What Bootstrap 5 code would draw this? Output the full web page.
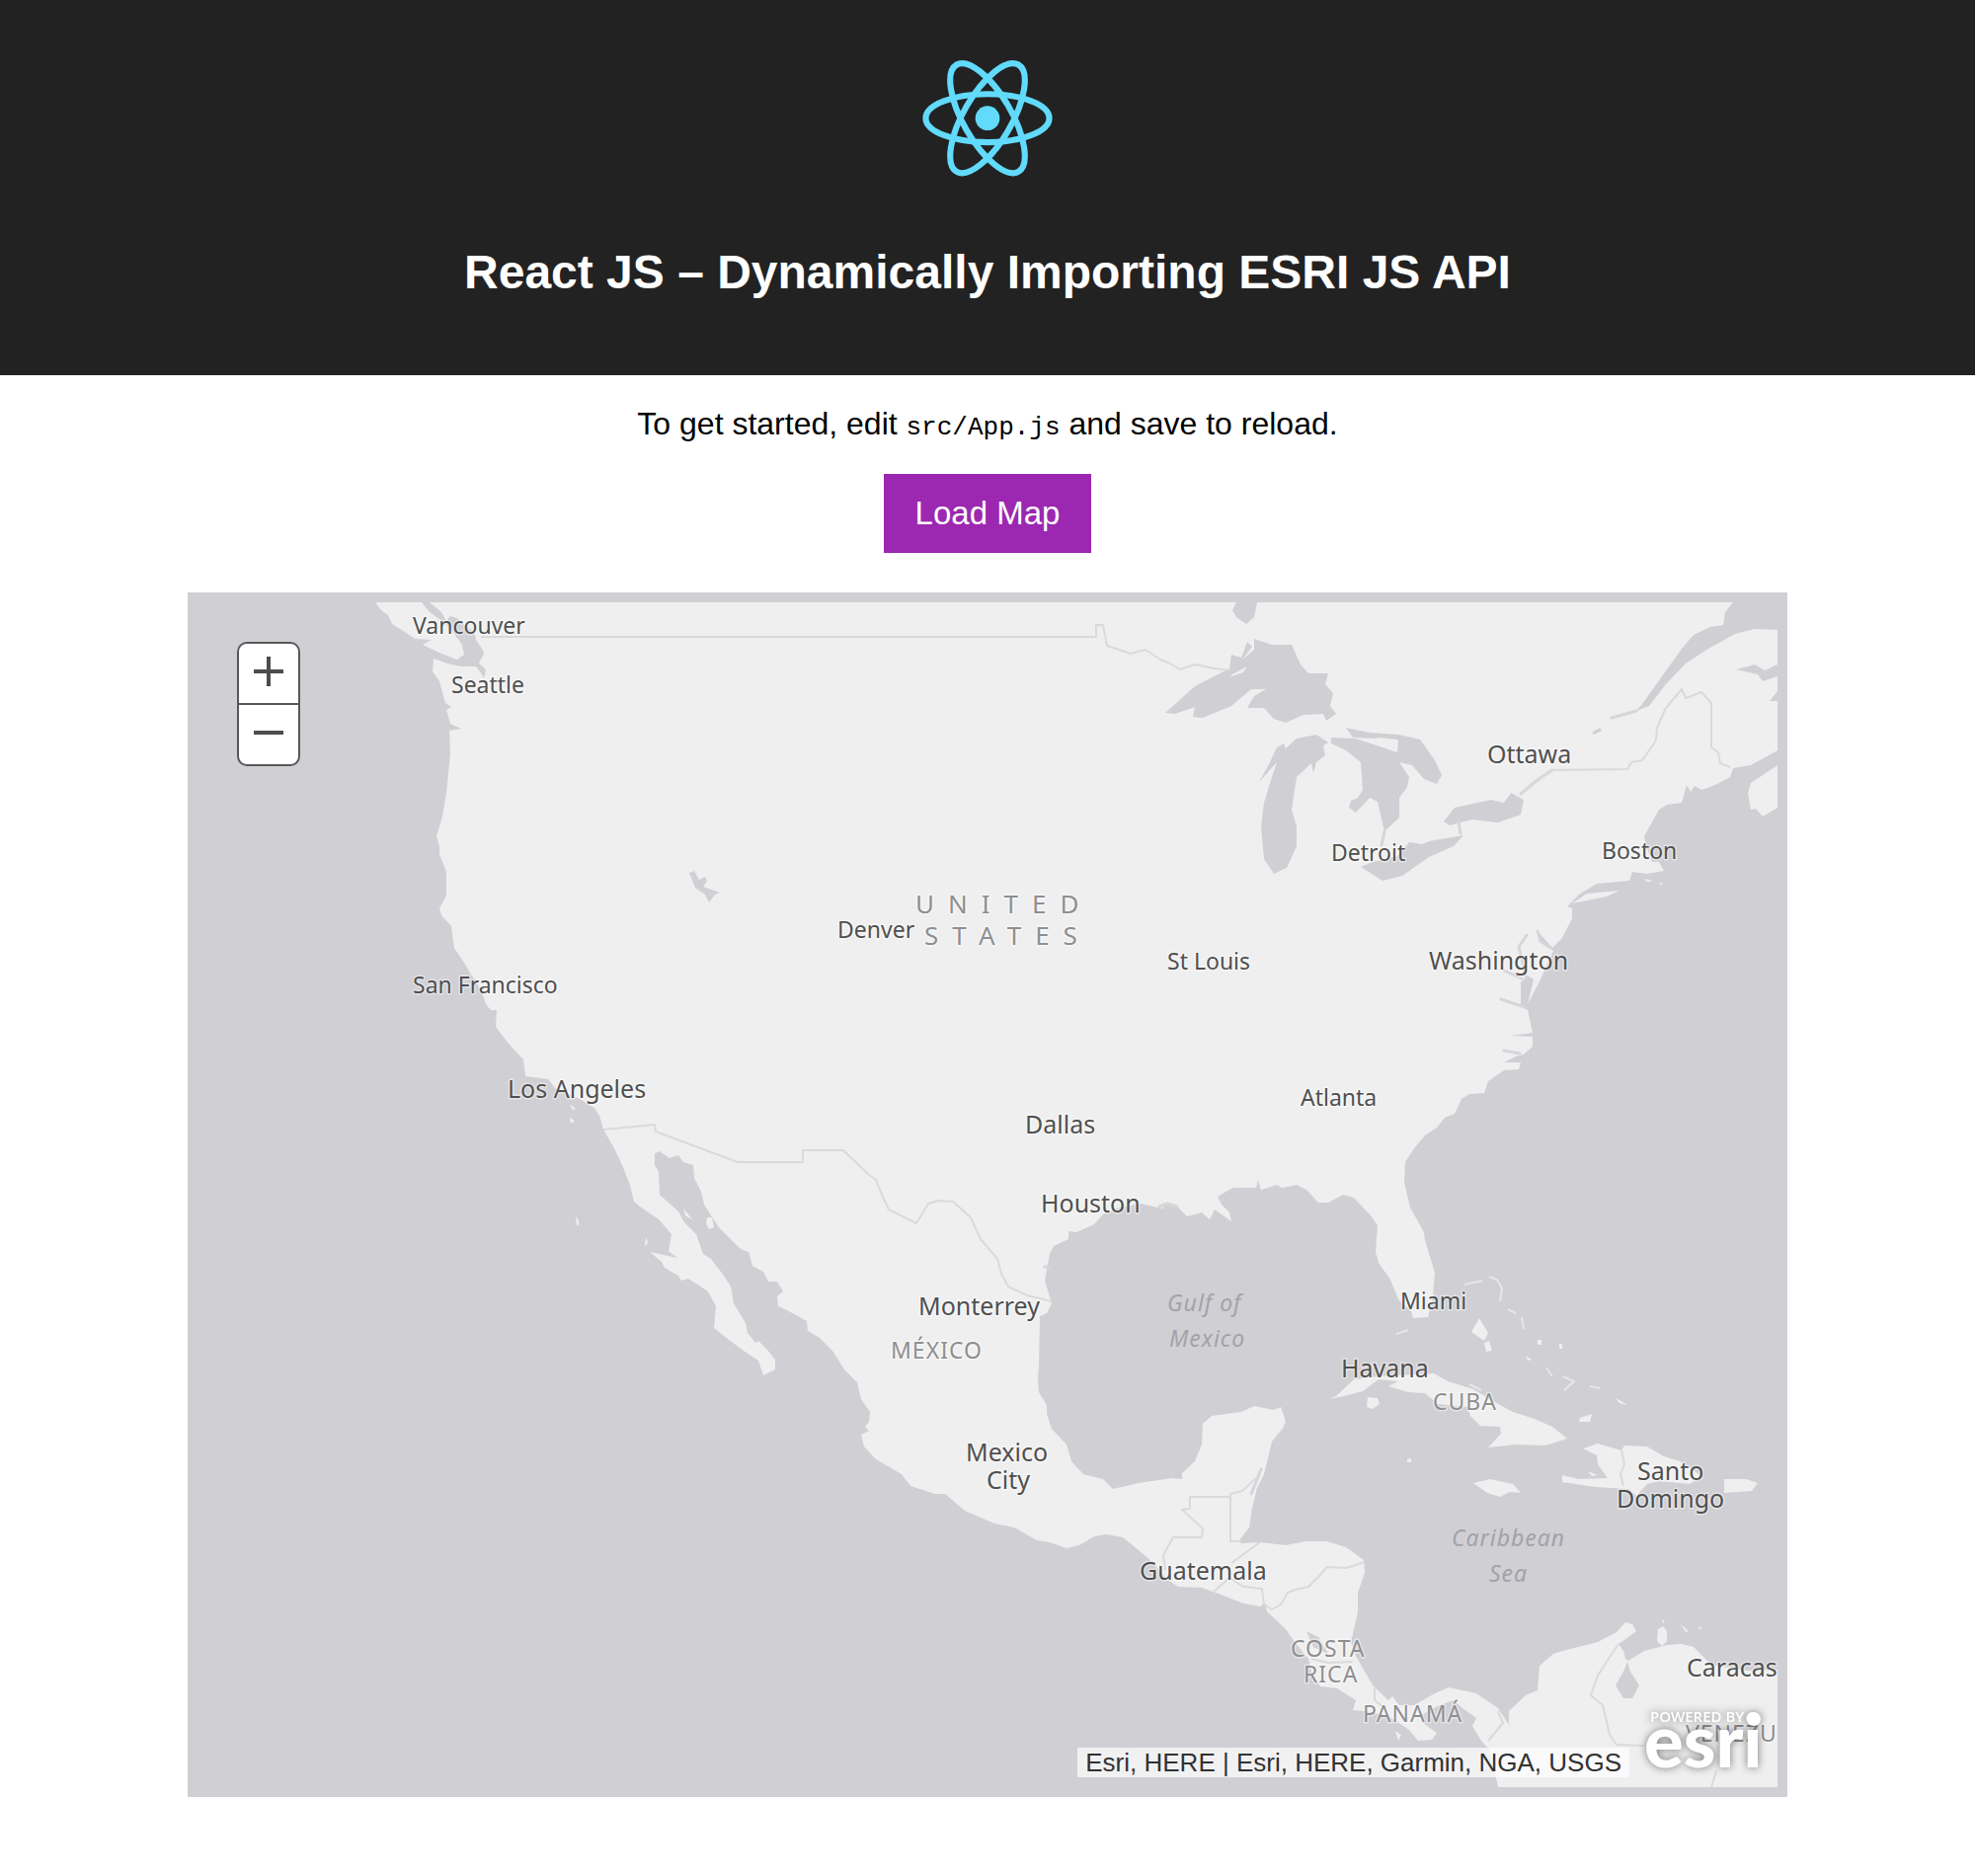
<!DOCTYPE html>
<html lang="en">
<head>
<meta charset="utf-8">
<meta name="viewport" content="width=device-width, initial-scale=1">
<title>React JS – Dynamically Importing ESRI JS API</title>
<link href="https://cdn.jsdelivr.net/npm/bootstrap@5.3.0/dist/css/bootstrap.min.css" rel="stylesheet">
<style>
  body { font-family: "Liberation Sans", Arial, sans-serif; color: #000; }
  .app-header { background: #222; padding: 40px; min-height: 380px; }
  .app-logo { width: 226px; height: 160px; }
  .app-title { font-size: 48px; line-height: 56px; margin: 48px 0 0; }
  .app-intro { font-size: 32px; line-height: 36px; margin: 31px 0 32px; }
  .app-intro code { font: 26px "Liberation Mono", monospace; color: inherit; }
  .load-btn { background: #9c27b0; color: #fff; font-size: 33px; line-height: 40px; padding: 20px 32px; border: 0; border-radius: 0; }
  .load-btn:hover { background: #7b1fa2; color: #fff; }
  .map-view { background: #d0cfd4; max-width: 1620px; padding: 10px; margin: 40px auto 80px; }
  .zoom-box { top: 50px; left: 50px; width: 64px; border: 2px solid #57585a; border-radius: 10px; background: #fff; }
  .zoom-box button { height: 60px; padding: 0; border: 0; background: none; }
  .zoom-box button + button { height: 62px; border-top: 2px solid #57585a; }
  .credits { right: 160px; bottom: 20px; height: 30px; padding: 0 8px; background: rgba(255,255,255,.7); color: #323232; font-size: 26px; line-height: 30px; }
  .brand-mark { right: 16px; bottom: 14px; width: 136px; height: 96px; filter: drop-shadow(0 0 4px rgba(0,0,0,.5)); }
  .land { fill: #efefef; }
  .lake { fill: #d0cfd4; }
  .line { fill: none; stroke: #dadada; stroke-width: 2; stroke-linejoin: round; }
  .inlet { fill: none; stroke: #d6d5da; stroke-width: 3; stroke-linecap: round; stroke-linejoin: round; }
  .labels { font-family: "Noto Sans", sans-serif; fill: #505050; paint-order: stroke; stroke: rgba(255,255,255,.45); stroke-width: 3; stroke-linejoin: round; }
  .town { font-size: 23px; }
  .city { font-size: 25px; }
  .country { font-size: 23px; fill: #8f8f92; letter-spacing: 1px; }
  .nation { font-size: 26px; fill: #8f8f92; letter-spacing: 14px; }
  .sea { font-size: 23px; font-style: italic; fill: #a3a3a8; stroke: none; letter-spacing: 1px; }
</style>
<script src="https://cdn.jsdelivr.net/npm/bootstrap@5.3.0/dist/js/bootstrap.bundle.min.js"></script>
</head>
<body>
<header class="app-header text-center">
  <svg class="app-logo" viewBox="0 0 841.9 595.3" role="img" aria-label="React logo">
    <g fill="none" stroke="#61dafb" stroke-width="23" transform="translate(421 296.500)">
      <ellipse rx="233" ry="91"/>
      <ellipse rx="233" ry="91" transform="rotate(60)"/>
      <ellipse rx="233" ry="91" transform="rotate(120)"/>
      <circle r="46" fill="#61dafb" stroke="none"/>
    </g>
  </svg>
  <h1 class="app-title fw-bold text-white">React JS – Dynamically Importing ESRI JS API</h1>
</header>

<main class="text-center">
  <p class="app-intro">To get started, edit <code>src/App.js</code> and save to reload.</p>
  <button type="button" class="btn load-btn">Load Map</button>

  <section class="map-view position-relative text-start" aria-label="Map">
    <svg class="d-block w-100 h-auto" viewBox="200 610 1600 1200">
      <g class="land">
        <path d="M380 610H427L435 620 445 627 453 634 460 642 468 653 470 663 463 668 447 662 428 653 437 648 420 647 410 640 397 632 393 623 386 618Z"/>
        <path d="M435 610L447 620 452 629 456 624 463 626 470 633 480 640 482 648 488 657 490 662 485 672 492 678 490 687 486 680 482 675 467 675 453 672 439 667 438 680 445 690 451 712 457 716 452 719 456 733 467 738 455 740 456 763 452 803 448 827 442 847 445 857 445 865 452 883 452 907 445 920 447 927 457 938 460 960 470 975 477 987 483 995 489 1008 492 1017 497 1023 503 1023 502 1040 515 1057 530 1073 532 1090 555 1093 563 1103 587 1113 602 1122 607 1130 611 1144 622 1163 630 1180 638 1200 642 1217 648 1222 667 1235 680 1250 677 1267 686 1274 658 1268 670 1278 673 1284 687 1292 690 1297 697 1295 717 1308 725 1323 723 1345 733 1353 753 1368 768 1378 773 1393 785 1387 785 1377 777 1367 768 1358 765 1360 757 1350 755 1340 743 1320 740 1303 733 1292 720 1275 712 1270 705 1250 693 1238 687 1227 668 1210 667 1187 663 1180 663 1168 668 1166 678 1173 687 1170 692 1177 702 1180 703 1193 710 1207 713 1220 728 1243 750 1265 758 1268 762 1282 773 1288 778 1298 787 1298 793 1308 787 1313 788 1323 797 1327 817 1338 818 1348 830 1355 843 1368 855 1387 868 1400 872 1417 881 1430 880 1440 876 1445 880 1449 872 1453 875 1465 887 1478 913 1493 922 1505 947 1513 957 1513 977 1530 1007 1543 1027 1547 1050 1560 1063 1562 1080 1568 1093 1565 1108 1556 1120 1554 1137 1557 1153 1570 1167 1582 1180 1598 1193 1607 1217 1608 1231 1613 1259 1624 1276 1627 1281 1623 1283 1632 1302 1650 1311 1663 1325 1680 1328 1693 1337 1708 1354 1710 1373 1722 1370 1732 1382 1733 1406 1738 1427 1752 1436 1763 1450 1762 1455 1755 1441 1745 1439 1737 1458 1727 1472 1722 1481 1730 1495 1740 1491 1748 1500 1763 1509 1773 1517 1810H1800V1691L1768 1692 1745 1688 1733 1686 1722 1675 1715 1668 1703 1665 1689 1666 1665 1672 1649 1682 1646 1680 1644 1672 1639 1665 1649 1658 1657 1652 1653 1645 1646 1643 1637 1653 1618 1663 1590 1670 1573 1675 1559 1687 1557 1712 1545 1717 1528 1733 1528 1747 1517 1730 1495 1715 1467 1709 1453 1715 1432 1727 1417 1727 1410 1718 1406 1722 1391 1708 1382 1693 1373 1677 1368 1663 1375 1633 1375 1613 1382 1593 1381 1580 1363 1567 1344 1561 1322 1561 1302 1565 1276 1562 1257 1563 1255 1560 1265 1547 1268 1527 1273 1507 1280 1493 1285 1473 1288 1460 1300 1445 1301 1437 1297 1425 1290 1428 1270 1424 1257 1430 1227 1434 1218 1442 1217 1463 1210 1480 1197 1492 1197 1498 1187 1497 1153 1502 1127 1508 1117 1498 1097 1493 1085 1480 1080 1463 1065 1447 1060 1432 1060 1423 1052 1410 1051 1395 1052 1383 1053 1333 1060 1330 1065 1320 1058 1297 1063 1270 1067 1262 1082 1255 1082 1247 1090 1248 1108 1240 1117 1230 1133 1223 1155 1219 1177 1224 1183 1218 1192 1222 1202 1232 1217 1228 1225 1235 1230 1225 1247 1237 1245 1228 1237 1220 1233 1212 1248 1203 1272 1203 1274 1195 1277 1205 1293 1200 1298 1203 1313 1200 1323 1205 1335 1218 1345 1218 1360 1210 1371 1213 1388 1231 1395 1241 1393 1268 1396 1279 1408 1296 1416 1316 1429 1328 1431 1335 1446 1334 1451 1313 1453 1289 1443 1256 1442 1248 1428 1223 1422 1197 1423 1177 1432 1163 1443 1150 1455 1142 1463 1132 1473 1128 1480 1113 1488 1108 1503 1107 1507 1095 1523 1084 1538 1083 1540 1076 1523 1076 1535 1070 1543 1068 1552 1060 1552 1050 1530 1049 1552 1046 1547 1023 1540 1018 1540 995 1547 988 1553 992 1547 1017 1560 992 1573 963 1562 955 1557 943 1572 960 1582 950 1592 930 1592 920 1587 918 1600 905 1617 895 1650 892 1653 883 1667 885 1685 882 1680 873 1673 873 1667 857 1665 847 1680 820 1688 815 1703 813 1708 795 1712 802 1716 796 1723 800 1737 795 1752 787 1755 778 1773 775 1800 760V638L1777 637 1757 642 1730 657 1707 672 1687 693 1670 715 1657 720 1663 713 1688 678 1703 657 1715 643 1732 635 1745 633 1747 620 1755 610Z"/>
        <path d="M1800 775L1773 793 1770 803 1773 820 1778 819 1785 827 1800 818ZM1592 915L1607 905 1640 902 1627 908ZM1353 1414L1371 1397 1396 1394 1452 1391 1466 1399 1492 1407 1512 1419 1532 1430 1554 1437 1572 1445 1587 1457 1565 1464 1535 1463 1507 1466 1520 1452 1519 1445 1499 1444 1489 1434 1486 1425 1456 1422 1443 1411 1426 1410 1406 1404 1416 1399 1396 1397 1380 1409 1361 1414 1346 1417ZM1385 1415L1395 1416 1397 1422 1390 1427 1384 1425Z"/>
        <path d="M1603 1467L1618 1462 1642 1469 1645 1464 1668 1465 1685 1475 1701 1480 1723 1495 1711 1503 1681 1500 1668 1503 1657 1515 1650 1508 1615 1506 1582 1501 1582 1494 1599 1498 1628 1497 1618 1483 1617 1474ZM1746 1498H1768L1780 1502 1774 1510 1746 1512ZM1492 1502L1509 1498 1532 1503 1540 1512 1529 1511 1519 1516 1506 1512Z"/>
        <path d="M1498 1335L1507 1350 1503 1358 1490 1349ZM1503 1360L1508 1358 1511 1368 1505 1369ZM1600 1436L1612 1432 1610 1440 1599 1440ZM1636 1416L1649 1423 1640 1421ZM1557 1357h4v5h-4ZM1579 1361h3v5h-3ZM1545 1373l6 4-4 1ZM1608 1490l10 4-6 1ZM1425 1478l4-1v4h-4ZM1679 1650l5-3 4 5 0 10-5 5-5-5ZM1702 1645l8 7-3 1ZM1683 1640l3 2-2 2ZM1720 1647l4 2-3 1ZM1413 1753l6 4-3 6ZM583 1232l3 4v5h-2ZM654 1253l2 5-3 5ZM577 1118l6 5-3 1ZM577 1132l5 3-4 3ZM692 1224l10 12-8-5ZM716 1233l5 0 2 10-5 2-3-6ZM1665 890l9 2-6 1ZM1680 894l5 1-4 1ZM1299 1435l3 5-5 10Z"/>
      </g>
      <g fill="none" stroke="#e6e6e8" stroke-width="2">
        <path d="M1483 1301l18-4M1508 1293l8 3 5 9-2 13M1527 1326l8 4M1541 1334l2 12M1566 1385l6 9M1583 1394l11 5-10 9M1610 1404l10 2M1414 1351l12-4M1488 1402l12 6"/>
      </g>
      <g class="lake">
        <path d="M1180 722L1210 695 1245 677 1247 663 1257 666 1263 650 1268 655 1258 668 1270 658 1270 647 1288 653 1308 653 1317 673 1325 682 1345 682 1342 693 1350 702 1347 715 1353 723 1343 730 1340 723 1320 724 1302 732 1290 728 1280 717 1263 717 1270 705 1282 698 1267 698 1247 715 1218 727 1208 726 1210 716 1190 723Z"/>
        <path d="M1345 752L1333 744 1313 748 1302 758 1300 753 1293 757 1285 774 1275 792 1293 772 1287 790 1280 813 1277 837 1280 870 1290 885 1303 879 1313 857 1313 837 1308 820 1313 787 1328 773 1330 783 1333 772 1342 765 1340 755Z"/>
        <path d="M1358 730L1363 737 1387 742 1417 744 1438 749 1453 770 1460 785 1455 794 1442 789 1430 775 1417 772 1427 787 1425 797 1417 808 1417 828 1402 842 1395 812 1387 808 1373 823 1366 818 1368 811 1375 808 1380 800 1378 772 1363 760 1348 753V747L1373 748 1415 762 1416 750 1395 748 1370 747Z"/>
        <path d="M1378 878L1400 892 1420 887 1447 868 1472 857 1482 846 1447 852 1440 855 1427 853 1415 867 1390 873ZM1462 832L1473 818 1510 810 1523 813 1530 803 1543 810 1540 825 1517 833 1490 830 1468 836ZM1252 610H1273L1270 625 1262 632 1252 625 1248 618ZM698 884L703 882 708 891 714 888 716 892 712 898 729 904 724 906 718 914 714 906 704 899ZM1648 1683L1651 1693 1660 1707 1653 1720 1644 1720 1636 1707 1644 1693ZM1323 1652L1335 1658 1345 1675 1330 1668ZM1758 678L1777 673 1787 679 1800 673V685L1785 690 1780 683ZM1800 700L1792 710H1800ZM1612 742L1620 737 1622 740 1614 744Z"/>
      </g>
      <path class="land" d="M1246 684l17-9-4 6-12 4ZM1382 751l14-4 19 2-1 10-15-5Z"/>
      <g class="inlet">
        <path d="M1546 947l-8 12 3 12 4 18M1557 943l3 10 10 7M1523 983l18 8M1520 1012l24 8M1523 1064l16 3M1402 842l-3 14M1477 832l2 12M1540 804l18-15 14-9M1657 720l-25 7M1174 1222l8-3 10 3M1058 1283h5M1267 1513l6-15 4-10"/>
      </g>
      <g class="line">
        <path d="M487 645H1110V633H1117L1121 654 1145 662 1160 658 1175 668 1185 672 1195 678 1210 673 1230 677 1245 679M1542 802L1557 791 1570 780 1648 779 1652 772 1663 770 1677 750 1678 737 1687 717 1703 698 1707 707 1723 701 1733 712V757L1740 762 1742 773 1752 777"/>
        <path d="M611 1144L663 1139 664 1146 747 1177H813V1165H854L879 1189 887 1195 893 1210 900 1225 928 1239 940 1219 950 1216 965 1217 983 1233 993 1255 1010 1275 1014 1290 1021 1303 1040 1312 1065 1318"/>
        <path d="M1255 1561H1246V1513L1258 1510 1272 1497M1246 1516H1205V1528L1197 1529 1218 1548 1217 1557H1188L1178 1575 1180 1590M1276 1562L1247 1583M1229 1612L1245 1598 1259 1607 1278 1609 1280 1625 1288 1630 1297 1625 1304 1613 1312 1610 1325 1607 1335 1597 1344 1587 1363 1588 1382 1582M1328 1680L1345 1684 1370 1683M1392 1710v12l10 8M1639 1665L1627 1683 1618 1697 1611 1717 1623 1727 1630 1757 1637 1767 1665 1768M1738 1793L1733 1810M1517 1733L1522 1745 1507 1763M1642 1469l3 14-4 10 3 12"/>
      </g>
      <g class="labels">
        <g class="town">
          <text x="418" y="642">Vancouver</text><text x="457" y="702">Seattle</text>
          <text x="418" y="1006">San Francisco</text><text x="848" y="950">Denver</text>
          <text x="1182" y="982">St Louis</text><text x="1348" y="872">Detroit</text>
          <text x="1622" y="870">Boston</text><text x="1317" y="1120">Atlanta</text>
          <text x="1418" y="1326">Miami</text>
        </g>
        <g class="city">
          <text x="514" y="1112">Los Angeles</text><text x="1038" y="1148">Dallas</text>
          <text x="1054" y="1228">Houston</text><text x="930" y="1332">Monterrey</text>
          <text x="978" y="1480">Mexico</text><text x="999" y="1508">City</text>
          <text x="1154" y="1600">Guatemala</text><text x="1506" y="773">Ottawa</text>
          <text x="1447" y="982">Washington</text><text x="1358" y="1395">Havana</text>
          <text x="1658" y="1499">Santo</text><text x="1637" y="1527">Domingo</text>
          <text x="1708" y="1698">Caracas</text>
        </g>
        <g class="nation"><text x="927" y="925">UNITED</text><text x="936" y="957">STATES</text></g>
        <g class="country">
          <text x="902" y="1376">MÉXICO</text><text x="1451" y="1428">CUBA</text>
          <text x="1307" y="1678">COSTA</text><text x="1320" y="1704">RICA</text>
          <text x="1380" y="1744">PANAMÁ</text><text x="1707" y="1764">VENEZU</text>
        </g>
        <g class="sea">
          <text x="1182" y="1328">Gulf of</text><text x="1184" y="1364">Mexico</text>
          <text x="1470" y="1566">Caribbean</text><text x="1508" y="1602">Sea</text>
        </g>
      </g>
    </svg>

    <div class="zoom-box position-absolute d-flex flex-column" role="group" aria-label="Zoom">
      <button type="button" aria-label="Zoom in"><svg class="d-block mx-auto" width="30" height="34"><path d="M0 15H30M15 0V30" stroke="#4c4c4c" stroke-width="4"/></svg></button>
      <button type="button" aria-label="Zoom out"><svg class="d-block mx-auto" width="30" height="34"><path d="M0 15H30" stroke="#4c4c4c" stroke-width="4"/></svg></button>
    </div>
    <div class="credits position-absolute text-nowrap">Esri, HERE | Esri, HERE, Garmin, NGA, USGS</div>
    <svg class="brand-mark position-absolute" viewBox="0 0 136 96" fill="#fff">
      <text x="13" y="34" font-family="Open Sans, sans-serif" font-weight="600" font-size="15">POWERED BY</text>
      <text x="7" y="80" font-family="Lato, sans-serif" font-weight="900" font-size="74">esri</text>
      <circle cx="118" cy="31" r="7"/>
    </svg>
  </section>
</main>
</body>
</html>
